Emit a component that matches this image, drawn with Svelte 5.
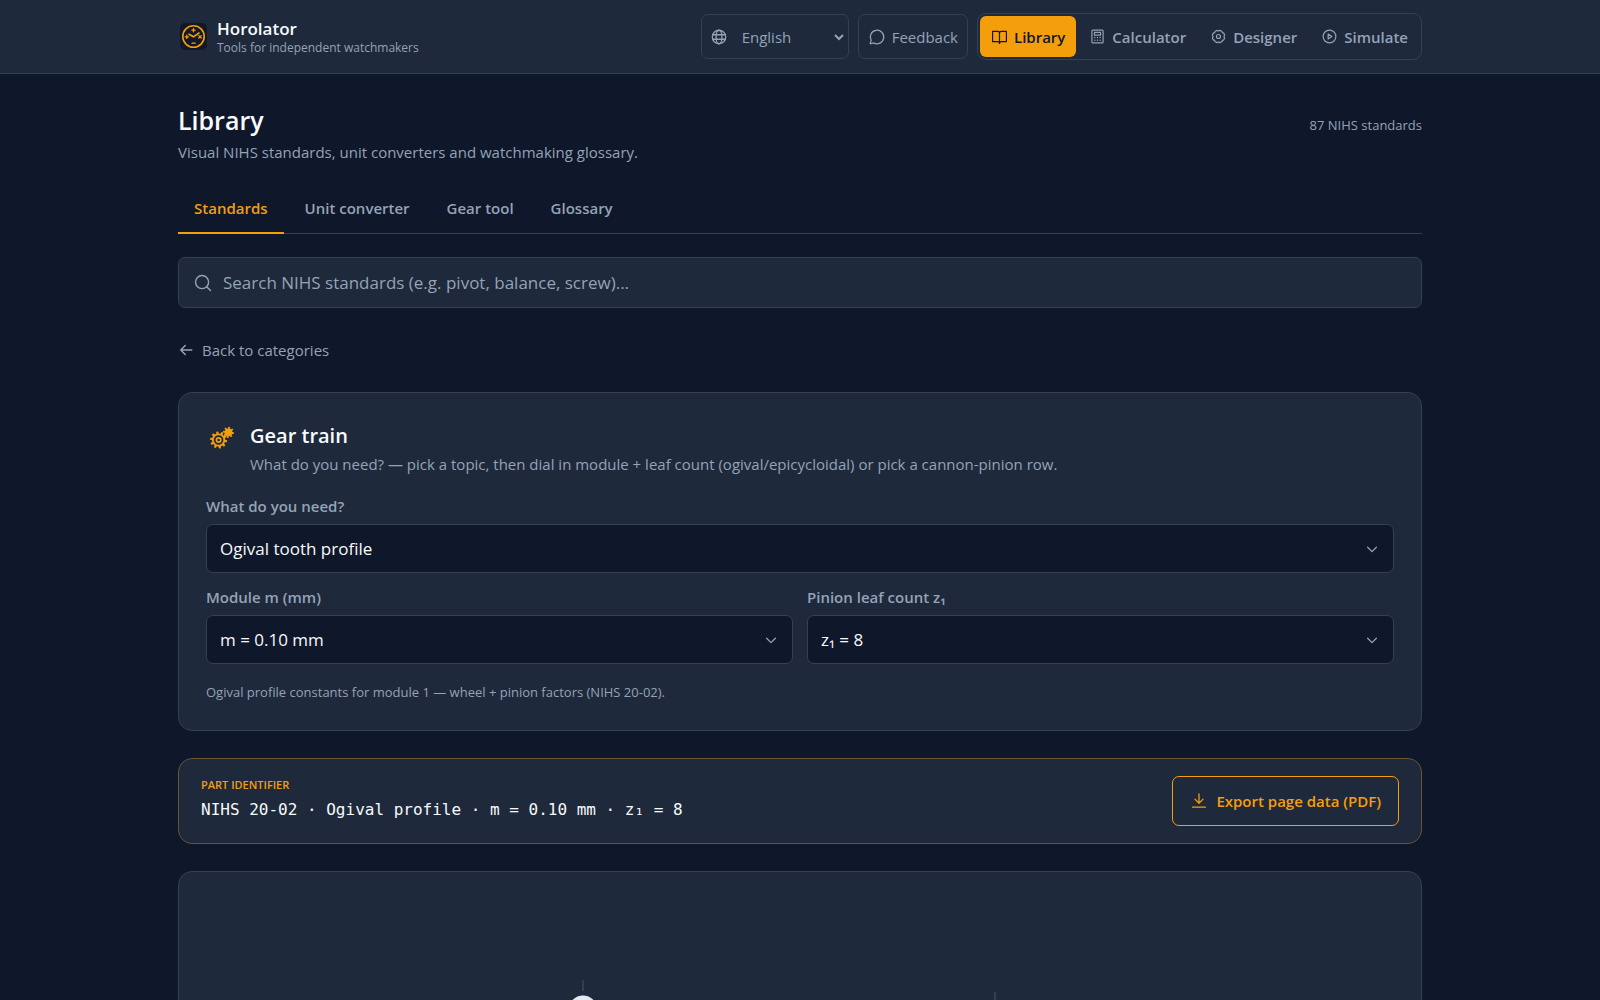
<script>
  const navItems = ["Library", "Calculator", "Designer", "Simulate"];
  const tabs = ["Standards", "Unit converter", "Gear tool", "Glossary"];

  let page = $state("Library");
  let tab = $state("Standards");
  let language = $state("English");
  let search = $state("");
  let topic = $state("Ogival tooth profile");
  let moduleSize = $state("0.10");
  let leafCount = $state("8");

  let identifier = $derived(`NIHS 20-02 · Ogival profile · m = ${moduleSize} mm · z₁ = ${leafCount}`);

  // outline of a gear wheel with square teeth
  function gearPath(cx, cy, teeth, outer, root) {
    const step = (Math.PI * 2) / teeth;
    const corners = [[root, -0.3], [outer, -0.2], [outer, 0.2], [root, 0.3]];
    let points = [];
    for (let i = 0; i < teeth; i++) {
      for (const [r, offset] of corners) {
        const angle = (i + offset) * step + 0.15;
        points.push(`${(cx + r * Math.cos(angle)).toFixed(2)} ${(cy + r * Math.sin(angle)).toFixed(2)}`);
      }
    }
    return "M" + points.join("L") + "Z";
  }
</script>

{#snippet icon(name)}
  <svg class="icon" viewBox="0 0 256 256" aria-hidden="true">
    {#if name === "Globe"}
      <circle cx="128" cy="128" r="96" />
      <ellipse cx="128" cy="128" rx="42" ry="96" />
      <path d="M38 96H218M38 160H218" />
    {:else if name === "Feedback"}
      <path d="M80 211A96 96 0 1 0 45 176L32 216a6 6 0 0 0 8 8Z" />
    {:else if name === "Library"}
      <path d="M128 80a28 28 0 0 1 28-28h76v152h-76a28 28 0 0 0-28 28a28 28 0 0 0-28-28H24V52h76a28 28 0 0 1 28 28v152" />
    {:else if name === "Calculator"}
      <rect x="44" y="32" width="168" height="192" rx="14" />
      <rect x="82" y="66" width="92" height="42" />
      <path class="dots" d="M88 144h.1M128 144h.1M168 144h.1M88 184h.1M128 184h.1M168 184h.1" />
    {:else if name === "Designer"}
      <circle cx="128" cy="128" r="30" />
      <path d="M106 36 L128 46 L150 36 L178 48 L186 70 L208 78 L220 106 L210 128 L220 150 L208 178 L186 186 L178 208 L150 220 L128 210 L106 220 L78 208 L70 186 L48 178 L36 150 L46 128 L36 106 L48 78 L70 70 L78 48Z" />
    {:else if name === "Simulate"}
      <circle cx="128" cy="128" r="96" />
      <path d="M108 92v72l56-36Z" />
    {:else if name === "Search"}
      <circle cx="116" cy="116" r="84" />
      <path d="M175 175l49 49" />
    {:else if name === "Back"}
      <path d="M220 128H44M116 56l-72 72l72 72" />
    {:else if name === "Caret"}
      <path d="M208 96l-80 80l-80-80" />
    {:else if name === "Download"}
      <path d="M128 28v132M70 102l58 58l58-58M36 216H220" />
    {/if}
  </svg>
{/snippet}

<header>
  <div class="wrap bar">
    <a class="brand" href="/">
      <svg class="logo" viewBox="0 0 27 27" aria-hidden="true">
        <rect width="27" height="27" rx="5" />
        <circle cx="13.5" cy="13.5" r="10.7" />
        <path d="M9 11.2l4.5 2.6l5.5-3.8" />
        <path class="marks" d="M13.5 5.6v3.2M11.9 7.2h3.2M5.2 13.8h3.2M6.8 12.2v3.2M18.8 12.6l2.4 2.4M21.2 12.6l-2.4 2.4M12 20.2h3.2" />
      </svg>
      <span class="brand-text">
        <strong>Horolator</strong>
        <small>Tools for independent watchmakers</small>
      </span>
    </a>
    <div class="actions">
      <label class="box language">
        {@render icon("Globe")}
        <select aria-label="Language" bind:value={language}>
          <option>English</option>
        </select>
      </label>
      <button class="box feedback">{@render icon("Feedback")}Feedback</button>
      <nav>
        {#each navItems as item}
          <button class:active={page === item} onclick={() => (page = item)}>
            {@render icon(item)}{item}
          </button>
        {/each}
      </nav>
    </div>
  </div>
</header>

<main class="wrap">
  <div class="heading">
    <div>
      <h1>Library</h1>
      <p>Visual NIHS standards, unit converters and watchmaking glossary.</p>
    </div>
    <span class="count">87 NIHS standards</span>
  </div>

  <div class="tabs" role="tablist">
    {#each tabs as name}
      <button role="tab" aria-selected={tab === name} class:active={tab === name} onclick={() => (tab = name)}>{name}</button>
    {/each}
  </div>

  <label class="search">
    {@render icon("Search")}
    <input type="text" aria-label="Search" placeholder="Search NIHS standards (e.g. pivot, balance, screw)..." bind:value={search} />
  </label>

  <button class="back">{@render icon("Back")}Back to categories</button>

  <section class="card picker">
    <div class="picker-head">
      <svg class="gears" viewBox="0 0 24 24" aria-hidden="true">
        <path fill-rule="evenodd" d="{gearPath(8.6, 14, 10, 8.6, 6.6)}M13.4 14a4.8 4.8 0 1 0-9.6 0a4.8 4.8 0 1 0 9.6 0Z" />
        <circle class="hub" cx="8.6" cy="14" r="2.2" />
        <path d={gearPath(18.4, 6.4, 8, 5.6, 4)} />
      </svg>
      <div>
        <h2>Gear train</h2>
        <p>What do you need? — pick a topic, then dial in module + leaf count (ogival/epicycloidal) or pick a cannon-pinion row.</p>
      </div>
    </div>

    <div class="fields">
      <div class="field wide">
        <label for="topic">What do you need?</label>
        <div class="select">
          <select id="topic" bind:value={topic}>
            <option>Ogival tooth profile</option>
          </select>
          {@render icon("Caret")}
        </div>
      </div>
      <div class="field">
        <label for="module">Module m (mm)</label>
        <div class="select">
          <select id="module" bind:value={moduleSize}>
            <option value="0.10">m = 0.10 mm</option>
          </select>
          {@render icon("Caret")}
        </div>
      </div>
      <div class="field">
        <label for="leaves">Pinion leaf count z₁</label>
        <div class="select">
          <select id="leaves" bind:value={leafCount}>
            <option value="8">z₁ = 8</option>
          </select>
          {@render icon("Caret")}
        </div>
      </div>
    </div>

    <p class="note">Ogival profile constants for module 1 — wheel + pinion factors (NIHS 20-02).</p>
  </section>

  <section class="card part">
    <div>
      <h3>Part identifier</h3>
      <code>{identifier}</code>
    </div>
    <button class="export">{@render icon("Download")}Export page data (PDF)</button>
  </section>

  <section class="card drawing">
    <svg viewBox="0 0 1190 400" role="img" aria-label="Ogival tooth profile">
      <g class="axis">
        <path d="M378 81V320" stroke-dasharray="11 4" />
        <path d="M790 93V320" stroke-dasharray="11 4" />
      </g>
      <circle class="tip" cx="378" cy="111" r="12" />
    </svg>
  </section>
</main>

<style>
  :global(body) {
    margin: 0;
    background: #0f172a;
    color: #f8fafc;
    font-family: "Segoe UI", "Open Sans", "Noto Sans", sans-serif;
    font-size: 15px;
    line-height: 24px;
  }

  button,
  select,
  input {
    font: inherit;
    color: inherit;
    background: none;
    border: 0;
    margin: 0;
  }

  button {
    cursor: pointer;
    white-space: nowrap;
  }

  h1,
  h2,
  h3,
  p {
    margin: 0;
  }

  .wrap {
    box-sizing: border-box;
    max-width: 1280px;
    margin: 0 auto;
    padding: 0 18px;
  }

  .icon {
    flex: none;
    width: 18px;
    height: 18px;
    fill: none;
    stroke: currentColor;
    stroke-width: 18;
    stroke-linecap: round;
    stroke-linejoin: round;
  }

  .icon .dots {
    stroke-width: 22;
  }

  header {
    background: #1e293b;
    border-bottom: 1px solid #334155;
  }

  .bar {
    display: flex;
    align-items: center;
    justify-content: space-between;
    padding-top: 13px;
    padding-bottom: 13px;
  }

  .brand {
    display: flex;
    align-items: center;
    gap: 10px;
    padding-left: 2px;
    color: inherit;
    text-decoration: none;
  }

  .logo {
    width: 27px;
    height: 27px;
    fill: none;
    stroke: #f59e0b;
    stroke-width: 1.6;
    stroke-linecap: round;
  }

  .logo rect {
    fill: #111827;
    stroke: none;
  }

  .logo .marks {
    stroke-width: 1.3;
  }

  .brand-text {
    display: flex;
    flex-direction: column;
    padding-top: 3px;
  }

  .brand strong {
    font-size: 17px;
    font-weight: 600;
    line-height: 20px;
  }

  .brand small {
    color: #94a3b8;
    font-size: 12px;
    line-height: 18px;
  }

  .actions {
    display: flex;
    align-items: center;
    gap: 9px;
    color: #94a3b8;
  }

  .box {
    box-sizing: border-box;
    display: flex;
    align-items: center;
    height: 45px;
    border: 1px solid #334155;
    border-radius: 7px;
  }

  .language {
    width: 148px;
    padding: 0 1px 0 8px;
    gap: 10px;
  }

  .language select {
    flex: 1;
    min-width: 0;
    padding: 0;
  }

  .feedback {
    padding: 0 9px;
    gap: 6px;
  }

  nav {
    display: flex;
    gap: 2px;
    padding: 2px;
    border: 1px solid #334155;
    border-radius: 9px;
  }

  nav button {
    display: flex;
    align-items: center;
    gap: 6px;
    height: 41px;
    padding: 0 11px;
    border-radius: 6px;
    font-weight: 600;
  }

  nav .icon {
    width: 17px;
    height: 17px;
  }

  nav .active {
    background: #f59e0b;
    color: #0f172a;
  }

  .heading {
    display: flex;
    align-items: center;
    justify-content: space-between;
    padding-top: 28px;
  }

  h1 {
    margin-bottom: 2px;
    font-size: 25px;
    font-weight: 600;
    line-height: 36px;
  }

  .heading p,
  .picker-head p {
    color: #94a3b8;
  }

  .count {
    color: #94a3b8;
    font-size: 13px;
    padding-bottom: 16px;
  }

  .tabs {
    display: flex;
    gap: 5px;
    margin-top: 19px;
    border-bottom: 1px solid #334155;
  }

  .tabs button {
    height: 51px;
    margin-bottom: -1px;
    padding: 0 16px;
    border-bottom: 2px solid transparent;
    color: #94a3b8;
    font-weight: 600;
  }

  .tabs .active {
    border-color: #f59e0b;
    color: #f59e0b;
  }

  .search {
    display: flex;
    align-items: center;
    gap: 10px;
    height: 49px;
    margin-top: 23px;
    padding: 0 14px;
    background: #1e293b;
    border: 1px solid #334155;
    border-radius: 7px;
    color: #94a3b8;
  }

  .search .icon {
    width: 20px;
    height: 20px;
  }

  .search input {
    flex: 1;
    padding: 0;
    font-size: 17px;
    outline: none;
  }

  .search input::placeholder {
    color: #94a3b8;
    opacity: 1;
  }

  .back {
    display: flex;
    align-items: center;
    gap: 8px;
    margin: 30px 0;
    padding: 0;
    color: #94a3b8;
  }

  .back .icon {
    width: 16px;
    height: 16px;
    stroke-width: 24;
  }

  .card {
    background: #1e293b;
    border: 1px solid #334155;
    border-radius: 14px;
  }

  .picker {
    padding: 27px 27px 26px;
  }

  .picker-head {
    display: flex;
    align-items: flex-start;
    gap: 16px;
  }

  .gears {
    flex: none;
    width: 24px;
    height: 24px;
    padding: 6px 0 0 4px;
    fill: #f59e0b;
  }

  .gears .hub {
    fill: none;
    stroke: #f59e0b;
    stroke-width: 1.7;
  }

  h2 {
    font-size: 20px;
    font-weight: 600;
    line-height: 32px;
  }

  .fields {
    display: grid;
    grid-template-columns: 1fr 1fr;
    gap: 12px 14px;
    margin-top: 18px;
  }

  .wide {
    grid-column: 1 / -1;
  }

  .field label {
    display: block;
    margin-bottom: 6px;
    color: #94a3b8;
    font-weight: 600;
  }

  .select {
    display: grid;
    align-items: center;
  }

  .select select {
    grid-area: 1 / 1;
    appearance: none;
    height: 49px;
    padding: 0 13px;
    background: #0f172a;
    border: 1px solid #334155;
    border-radius: 7px;
    font-size: 17px;
  }

  .select .icon {
    grid-area: 1 / 1;
    justify-self: end;
    width: 14px;
    height: 14px;
    margin-right: 15px;
    color: #94a3b8;
    stroke-width: 24;
    pointer-events: none;
  }

  .note {
    margin: 16px 0 0;
    color: #94a3b8;
    font-size: 13px;
  }

  .part {
    display: flex;
    align-items: center;
    justify-content: space-between;
    margin: 27px 0;
    padding: 17px 22px;
    border-color: #6b5330;
  }

  h3 {
    color: #f59e0b;
    font-size: 11px;
    font-weight: 600;
    line-height: 18px;
    text-transform: uppercase;
  }

  code {
    display: block;
    font-family: Consolas, "DejaVu Sans Mono", monospace;
    font-size: 16px;
    line-height: 32px;
  }

  .export {
    display: flex;
    align-items: center;
    gap: 8px;
    height: 50px;
    padding: 0 17px;
    border: 1px solid #f59e0b;
    border-radius: 7px;
    color: #f59e0b;
    font-weight: 600;
  }

  .drawing {
    padding: 27px 26px;
  }

  .drawing svg {
    display: block;
    width: 100%;
  }

  .axis {
    fill: none;
    stroke: #475569;
    stroke-width: 1;
  }

  .tip {
    fill: #94a3b8;
    stroke: #e2e8f0;
    stroke-width: 5;
  }
</style>
